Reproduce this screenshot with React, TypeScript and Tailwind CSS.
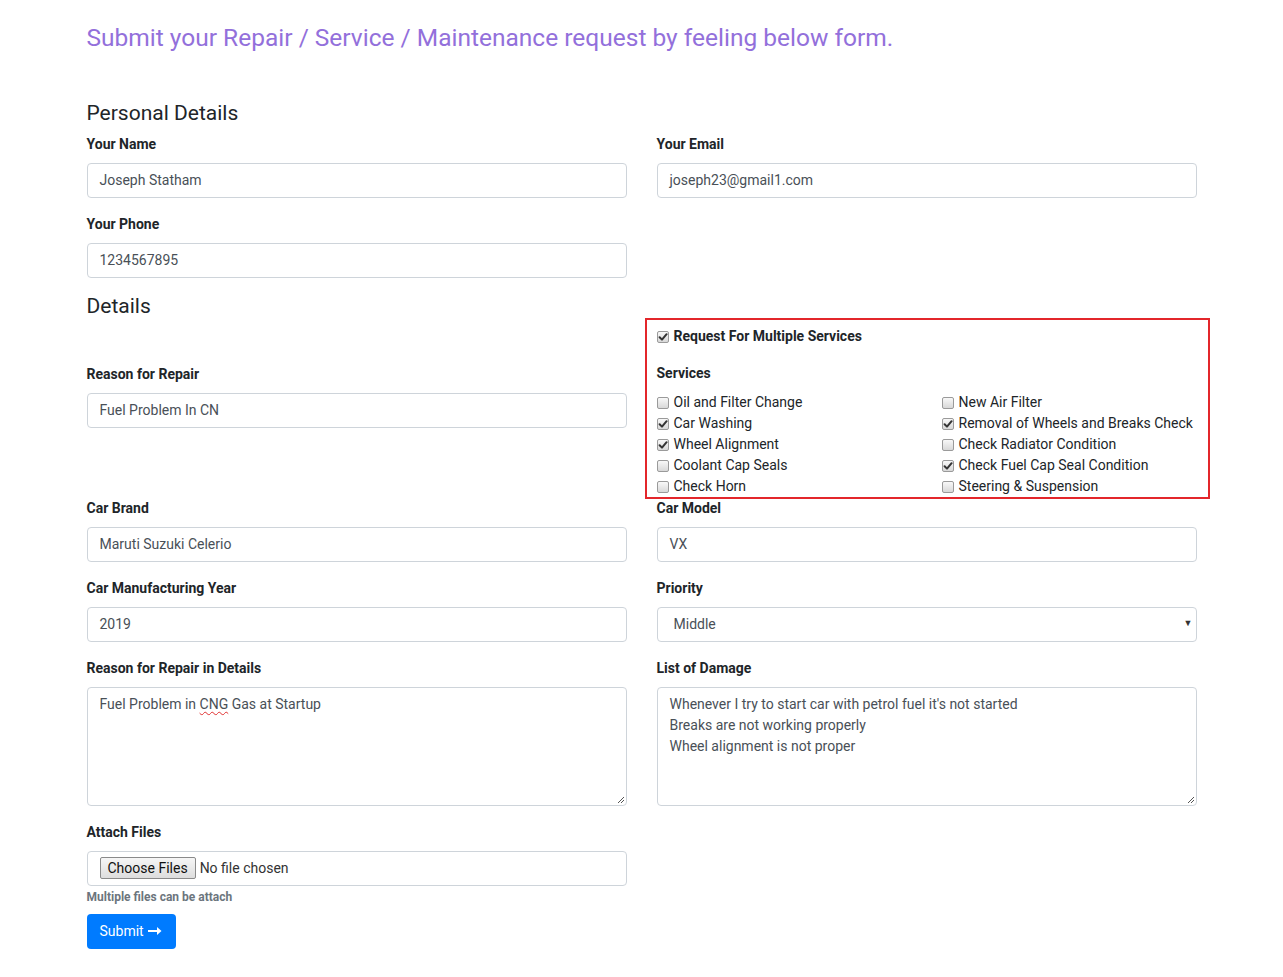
import React from "react";

const font = { fontFamily: "Roboto, 'Liberation Sans', sans-serif" };

function Box({ checked }: { checked?: boolean }) {
  return (
    <span className="inline-flex items-center justify-center w-[12px] h-[12px] shrink-0 rounded-[2px] border border-[#9a9a9a] bg-linear-to-b from-[#f8f8f8] to-[#d8d8d8]">
      {checked && (
        <svg width="10" height="10" viewBox="0 0 10 10">
          <path d="M1.6 5.2 L4 7.6 L8.6 2.2" fill="none" stroke="#333" strokeWidth="2" strokeLinecap="round" strokeLinejoin="round" />
        </svg>
      )}
    </span>
  );
}

function Label({ children }: { children: React.ReactNode }) {
  return <div className="text-[14px] leading-[21px] font-bold text-[#212529] mb-[8px]">{children}</div>;
}

function Input({ value }: { value: string }) {
  return (
    <div className="h-[35px] border border-[#ced4da] rounded-[4px] px-[12px] flex items-center text-[14px] text-[#495057] bg-white">
      {value}
    </div>
  );
}

function Group({ label, value }: { label: string; value: string }) {
  return (
    <div className="mb-[16px]">
      <Label>{label}</Label>
      <Input value={value} />
    </div>
  );
}

function Grip() {
  return (
    <svg className="absolute right-[1px] bottom-[1px]" width="9" height="9" viewBox="0 0 9 9">
      <path d="M8 2 L2 8 M8 5 L5 8" stroke="#555" strokeWidth="1" />
    </svg>
  );
}

function Item({ label, checked }: { label: string; checked?: boolean }) {
  return (
    <div className="flex items-center h-[21px] text-[14px] text-[#212529]">
      <Box checked={checked} />
      <span className="ml-[5px]">{label}</span>
    </div>
  );
}

export default function App() {
  return (
    <div style={font} className="bg-white min-h-screen text-[#212529]">
      <div className="max-w-[1140px] mx-auto px-[15px] pb-[20px]">
        <h4 className="text-[24.5px] leading-[29px] text-[#9370db] pt-[23px]">
          Submit your Repair / Service / Maintenance request by feeling below form.
        </h4>

        <h5 className="text-[21px] leading-[24px] mt-[49px] mb-[9px]">Personal Details</h5>
        <div className="grid grid-cols-2 gap-x-[30px]">
          <Group label="Your Name" value="Joseph Statham" />
          <Group label="Your Email" value="joseph23@gmail1.com" />
          <Group label="Your Phone" value="1234567895" />
          <div />
        </div>

        <h5 className="text-[21px] leading-[24px]">Details</h5>
        <div className="grid grid-cols-2 gap-x-[30px]">
          <div className="pt-[46px]">
            <Group label="Reason for Repair" value="Fuel Problem In CN" />
          </div>
          <div className="ml-[-12px] mr-[-13px] border-2 border-[#e3262b] pl-[10px] pt-[6px]">
            <div className="flex items-center h-[21px] text-[14px] font-bold">
              <Box checked />
              <span className="ml-[5px]">Request For Multiple Services</span>
            </div>
            <div className="mt-[16px]">
              <Label>Services</Label>
              <div className="grid grid-cols-[285px_1fr] mt-[1px]">
                <Item label="Oil and Filter Change" />
                <Item label="New Air Filter" />
                <Item label="Car Washing" checked />
                <Item label="Removal of Wheels and Breaks Check" checked />
                <Item label="Wheel Alignment" checked />
                <Item label="Check Radiator Condition" />
                <Item label="Coolant Cap Seals" />
                <Item label="Check Fuel Cap Seal Condition" checked />
                <Item label="Check Horn" />
                <Item label="Steering & Suspension" />
              </div>
            </div>
          </div>
        </div>

        <div className="grid grid-cols-2 gap-x-[30px] mt-[-1.5px]">
          <Group label="Car Brand" value="Maruti Suzuki Celerio" />
          <Group label="Car Model" value="VX" />
          <Group label="Car Manufacturing Year" value="2019" />
          <div className="mb-[16px]">
            <Label>Priority</Label>
            <div className="h-[35px] border border-[#ced4da] rounded-[4px] pl-[16px] pr-[3px] flex items-center justify-between text-[14px] text-[#495057]">
              <span>Middle</span>
              <span className="text-[9px] text-[#333]">▼</span>
            </div>
          </div>
          <div className="mb-[16px]">
            <Label>Reason for Repair in Details</Label>
            <div className="relative h-[119px] border border-[#ced4da] rounded-[4px] px-[12px] py-[6px] text-[14px] leading-[21px] text-[#495057]">
              Fuel Problem in <span className="underline decoration-wavy decoration-[#e03030] decoration-1 underline-offset-2">CNG</span> Gas at Startup
              <Grip />
            </div>
          </div>
          <div className="mb-[16px]">
            <Label>List of Damage</Label>
            <div className="relative h-[119px] border border-[#ced4da] rounded-[4px] px-[12px] py-[6px] text-[14px] leading-[21px] text-[#495057]">
              <div>Whenever I try to start car with petrol fuel it's not started</div>
              <div>Breaks are not working properly</div>
              <div>Wheel alignment is not proper</div>
              <Grip />
            </div>
          </div>
          <div>
            <Label>Attach Files</Label>
            <div className="h-[35px] border border-[#ced4da] rounded-[4px] px-[12px] flex items-center text-[14px] text-[#495057]">
              <span className="h-[22px] px-[7px] flex items-center border border-[#8a8a8a] rounded-[2px] bg-linear-to-b from-[#f6f6f6] to-[#dddddd] text-[#111]">
                Choose Files
              </span>
              <span className="ml-[4px] text-[#333]">No file chosen</span>
            </div>
            <div className="mt-[3px] text-[12px] leading-[17px] font-bold text-[#6c757d]">Multiple files can be attach</div>
          </div>
          <div />
        </div>

        <button className="mt-[8px] h-[35px] pl-[13px] pr-[14px] rounded-[4px] bg-[#007bff] text-white text-[14px] flex items-center">
          Submit
          <svg className="ml-[4px]" width="14" height="10" viewBox="0 0 14 10">
            <path d="M0 5 H10" stroke="white" strokeWidth="2" />
            <path d="M9 1 L13.5 5 L9 9 Z" fill="white" />
          </svg>
        </button>
      </div>
    </div>
  );
}
